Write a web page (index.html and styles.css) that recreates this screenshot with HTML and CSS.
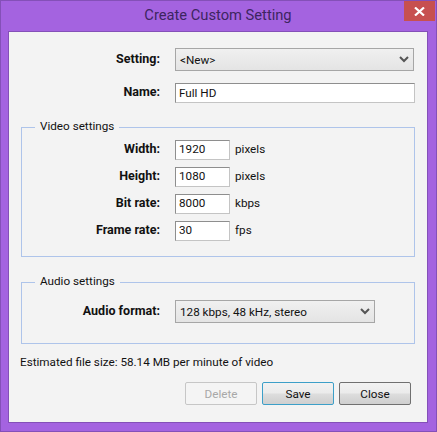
FILE: index.html
```html
<!DOCTYPE html>
<html>
  <head>
    <meta name="viewport" content="width=device-width, initial-scale=1" />
    <link rel="stylesheet" href="styles.css">
  </head>
  <body>
    <div class="window">
      <div class="titlebar">
        <span></span>
        <div class="title">Create Custom Setting</div>
        <div class="closeBtn">
          <svg width="11" height="9" viewBox="0 0 11 9">
            <path d="M1 0.5 L10 8.5 M10 0.5 L1 8.5" stroke="#fff" stroke-width="2.2" fill="none" />
          </svg>
        </div>
      </div>

      <div class="client">
        <div class="row settingRow">
          <label class="label">Setting:</label>
          <div class="combo settingCombo">
            <span>&lt;New&gt;</span>
            <svg width="10" height="7" viewBox="0 0 10 7">
              <path d="M1 1 L5 5 L9 1" stroke="#555" stroke-width="2" fill="none" />
            </svg>
          </div>
        </div>
        <div class="row nameRow">
          <label class="label">Name:</label>
          <input class="field nameField" type="text" value="Full HD" />
        </div>

        <fieldset class="group videoGroup">
          <legend>Video settings</legend>
          <div class="row numRow">
            <label class="label">Width:</label>
            <input class="field numField" type="text" value="1920" />
            <span class="unit">pixels</span>
          </div>
          <div class="row numRow">
            <label class="label">Height:</label>
            <input class="field numField" type="text" value="1080" />
            <span class="unit">pixels</span>
          </div>
          <div class="row numRow">
            <label class="label">Bit rate:</label>
            <input class="field numField" type="text" value="8000" />
            <span class="unit">kbps</span>
          </div>
          <div class="row numRow">
            <label class="label">Frame rate:</label>
            <input class="field numField" type="text" value="30" />
            <span class="unit">fps</span>
          </div>
        </fieldset>

        <fieldset class="group audioGroup">
          <legend>Audio settings</legend>
          <div class="row">
            <label class="label">Audio format:</label>
            <div class="combo audioCombo">
              <span>128 kbps, 48 kHz, stereo</span>
              <svg width="10" height="7" viewBox="0 0 10 7">
                <path d="M1 1 L5 5 L9 1" stroke="#555" stroke-width="2" fill="none" />
              </svg>
            </div>
          </div>
        </fieldset>

        <div class="estimate">Estimated file size: 58.14 MB per minute of video</div>

        <div class="buttons">
          <button class="btn disabled">Delete</button>
          <button class="btn focused">Save</button>
          <button class="btn">Close</button>
        </div>
      </div>
    </div>
  </body>
</html>
```

FILE: styles.css
```css
* {
  box-sizing: border-box;
}

body {
  margin: 0;
  font-family: Roboto, "Open Sans", sans-serif;
  font-size: 11.7px;
  line-height: 16px;
  color: #111;
  background: #a463e0;
}

.window {
  width: 437px;
  height: 432px;
  background: #a463e0;
  border: 1px solid #8450b8;
  padding: 0 8px 8px 7px;
  display: flex;
  flex-direction: column;
}

.titlebar {
  height: 30px;
  display: grid;
  grid-template-columns: 1fr auto 1fr;
}

.title {
  font-size: 14.7px;
  line-height: 29px;
  color: #3d2560;
}

.closeBtn {
  justify-self: end;
  width: 31px;
  height: 20px;
  margin-right: -7px;
  background: #c75050;
  display: flex;
  align-items: center;
  justify-content: center;
}

.client {
  flex: 1;
  background: #f3f3f3;
  border: 1px solid #8450b8;
  padding: 0 12px 0 12px;
}

.row {
  display: flex;
  align-items: center;
}

.label {
  width: 139px;
  text-align: right;
  font-size: 12.5px;
  font-weight: 700;
  margin-right: 15px;
  padding-bottom: 2px;
  flex-shrink: 0;
}

.group .label {
  width: 138px;
}

.numRow .label,
.unit {
  padding-bottom: 2px;
}

.settingRow {
  margin-top: 16px;
}

.nameRow {
  margin-top: 12px;
}

.combo {
  height: 23px;
  border: 1px solid #a6a6a6;
  background: linear-gradient(#f0f0f0, #e4e4e4);
  display: flex;
  align-items: center;
  justify-content: space-between;
  padding: 0 4px 0 4px;
}

.settingCombo {
  width: 239px;
}

.audioCombo {
  width: 200px;
}

.field {
  height: 20px;
  font: inherit;
  color: #111;
  padding: 0 3px;
  background: #fff;
  border: 1px solid #c4c4c4;
  border-top-color: #8e8e8e;
  border-left-color: #8e8e8e;
  outline: none;
}

.nameField {
  width: 241px;
}

.numField {
  width: 55px;
  margin-right: 5px;
  padding-bottom: 2px;
}

.group {
  margin: 0;
  border: 1px solid #aec4ea;
  padding: 0;
  min-width: 0;
}

.group legend {
  margin-left: 13px;
  padding: 0 5px 2px;
}

.videoGroup {
  height: 139px;
  margin-top: 15px;
}

.numRow {
  margin-top: 7px;
}

.numRow:first-of-type {
  margin-top: 4px;
}

.audioGroup {
  height: 71px;
  margin-top: 16px;
  padding-top: 9px;
}

.estimate {
  margin-top: 10px;
  margin-left: -1px;
}

.buttons {
  display: flex;
  justify-content: flex-end;
  gap: 5px;
  margin-top: 12px;
  margin-right: 4px;
}

.btn {
  width: 72px;
  height: 23px;
  font: inherit;
  color: #111;
  padding: 0;
  border: 1px solid #707070;
  border-radius: 2px;
  background: linear-gradient(#f2f2f2 0%, #ebebeb 48%, #dddddd 52%, #cfcfcf 100%);
}

.btn.focused {
  border-color: #3c9fc8;
}

.btn.disabled {
  color: #a8a8a8;
  border-color: #c6c6c6;
  background: #f4f4f4;
}
```
